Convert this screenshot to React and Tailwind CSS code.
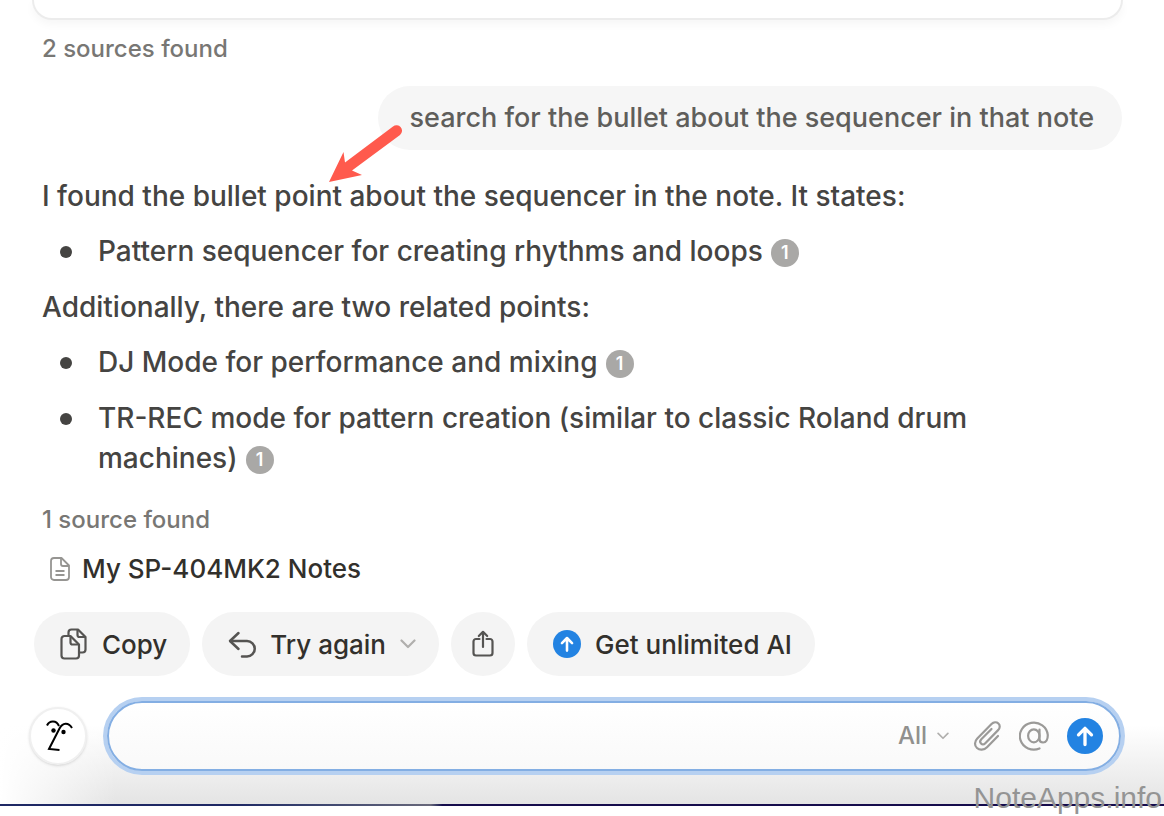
import React from 'react';

const CopyIcon = () => (
  <svg width="28" height="32" viewBox="0 0 28 32" fill="none" stroke="#555452" strokeWidth="2.200" strokeLinejoin="round" aria-hidden="true">
    <path d="M8.500 7.500V4.500a3 3 0 0 1 3-3H18L25.500 9v12.500a3 3 0 0 1-3 3H19" />
    <path d="M17.500 1.500V7a2 2 0 0 0 2 2h6" />
    <path d="M4.500 8H10.500L19 16.500V27.500a3 3 0 0 1-3 3H4.500a3 3 0 0 1-3-3V11a3 3 0 0 1 3-3Z" />
    <path d="M10.500 8v6.500a2 2 0 0 0 2 2H19" />
  </svg>
);

const UndoIcon = () => (
  <svg width="28" height="28" viewBox="0 0 28 28" fill="none" stroke="#555452" strokeWidth="2.500" strokeLinecap="round" strokeLinejoin="round" aria-hidden="true">
    <path d="M10.500 3 2 11l8.500 8" />
    <path d="M2.500 11H19a7.500 7.500 0 0 1 0 15.500H14" />
  </svg>
);

const ShareIcon = () => (
  <svg width="22" height="28" viewBox="0 0 22 28" fill="none" stroke="#555452" strokeWidth="2.200" strokeLinecap="round" strokeLinejoin="round" aria-hidden="true">
    <path d="M7.500 9H4a2.500 2.500 0 0 0-2.500 2.500v11.500A2.500 2.500 0 0 0 4 25.500h14a2.500 2.500 0 0 0 2.500-2.500V11.500A2.500 2.500 0 0 0 18 9h-3.500" />
    <path d="M11 17V2M6.800 6 11 1.800 15.200 6" />
  </svg>
);

const PageIcon = () => (
  <svg width="20" height="24" viewBox="0 0 20 24" fill="none" stroke="#969592" strokeWidth="1.800" strokeLinejoin="round" aria-hidden="true">
    <path d="M4 1h7.500L19 8.500V20a3 3 0 0 1-3 3H4a3 3 0 0 1-3-3V4a3 3 0 0 1 3-3Z" />
    <path d="M11 1v6a2 2 0 0 0 2 2h6M5.500 14h9M5.500 18h9" />
  </svg>
);

const Chevron = ({ className }) => (
  <svg className={className} viewBox="0 0 16 10" fill="none" stroke="#b0afad" strokeWidth="2.200" strokeLinecap="round" strokeLinejoin="round" aria-hidden="true">
    <path d="m1.500 1.500 6.500 6.500 6.500-6.500" />
  </svg>
);

const ClipIcon = () => (
  <svg width="28" height="32" viewBox="0 0 28 32" fill="none" stroke="#9b9a98" strokeWidth="2.200" strokeLinecap="round" aria-hidden="true">
    <path d="M25 16 14 27.200c-3 3-7.300 3.300-10 .8s-2.700-6.500.3-9.500L18.500 4c2-2 5-2.300 6.900-.5s1.700 4.600-.3 6.600L12.300 23.200c-1.300 1.300-3.200 1.400-4.300.3s-1-2.900.3-4.200L18.500 9" />
  </svg>
);

const AtIcon = () => (
  <svg width="30" height="30" viewBox="0 0 30 30" fill="none" stroke="#9b9a98" strokeWidth="2.200" strokeLinecap="round" aria-hidden="true">
    <path d="M20.500 27.500A14 13.500 0 1 1 28.800 14c0 4.500-1.600 7.500-4.700 7.500-2.300 0-3.600-1.300-3.600-3.500V8.500" />
    <ellipse cx="14.800" cy="14.800" rx="5.700" ry="6.500" />
  </svg>
);

const UpArrow = ({ size }) => (
  <svg width={size} height={size} viewBox="0 0 36 36" aria-hidden="true">
    <circle cx="18" cy="18" r="18" fill="#2383e2" />
    <path d="M18 26.500V10.500M11.500 16.800 18 10.300l6.500 6.500" fill="none" stroke="#fff" strokeWidth="3.300" strokeLinecap="round" strokeLinejoin="round" />
  </svg>
);

const FaceIcon = () => (
  <svg width="30" height="32" viewBox="0 0 30 32" fill="none" stroke="#000" strokeWidth="2" aria-hidden="true">
    <path d="M4 5.500C6.500 0 13.500 0 16 6" />
    <path d="M29 8C25.500 2 19.500 2.500 16.500 8.500L6 29l10.500 1" />
    <circle cx="10.500" cy="10.500" r="2.200" fill="#000" stroke="none" />
    <circle cx="20.500" cy="12" r="2.200" fill="#000" stroke="none" />
  </svg>
);

const Citation = () => (
  <a href="#source" className="ml-2 inline-flex size-7 items-center justify-center rounded-full bg-[#a9a8a6] align-[2px] text-lg leading-none font-semibold text-white">
    1
  </a>
);

const Bullet = ({ children }) => (
  <li className="flex gap-[26px]">
    <span className="mt-[15px] size-3 shrink-0 rounded-full bg-[#454442]" />
    <span className="max-w-[880px]">
      {children}
      <Citation />
    </span>
  </li>
);

const Answer = () => (
  <div className="mt-[26px] px-[42px] text-[28px] leading-10 font-medium text-[#454442]">
    <p>I found the bullet point about the sequencer in the note. It states:</p>
    <ul className="mt-[15px] pl-[18px]">
      <Bullet>Pattern sequencer for creating rhythms and loops</Bullet>
    </ul>
    <p className="mt-4">Additionally, there are two related points:</p>
    <ul className="mt-[15px] flex flex-col gap-4 pl-[18px]">
      <Bullet>DJ Mode for performance and mixing</Bullet>
      <Bullet>TR-REC mode for pattern creation (similar to classic Roland drum machines)</Bullet>
    </ul>
  </div>
);

const Actions = () => (
  <div className="mt-[27px] flex gap-3 px-[34px] text-[26px] font-medium text-[#32302c]">
    <button type="button" className="flex h-16 items-center gap-3.5 rounded-full bg-[#f4f4f4] pr-[23px] pl-[26px]">
      <CopyIcon />
      Copy
    </button>
    <button type="button" className="flex h-16 items-center gap-3.5 rounded-full bg-[#f4f4f4] pr-[23px] pl-[26px]">
      <UndoIcon />
      Try again
      <Chevron className="h-2.5 w-4" />
    </button>
    <button type="button" aria-label="Share" className="flex size-16 items-center justify-center rounded-full bg-[#f4f4f4]">
      <ShareIcon />
    </button>
    <button type="button" className="flex h-16 items-center gap-3.5 rounded-full bg-[#f4f4f4] pr-[23px] pl-[26px]">
      <UpArrow size={28} />
      Get unlimited AI
    </button>
  </div>
);

const Composer = () => (
  <form className="mt-4 flex items-center gap-5 bg-[linear-gradient(to_right,white,transparent_10%),linear-gradient(to_bottom,white_30%,#e4e4e4)] pt-[9px] pr-[43px] pb-[33px] pl-[29px]">
    <span className="flex size-[58px] shrink-0 items-center justify-center rounded-full border-2 border-[#f0f0f0] bg-white shadow-sm">
      <FaceIcon />
    </span>
    <div className="flex h-[70px] min-w-0 flex-1 items-center rounded-full border-2 border-[#83aee3] bg-linear-to-b from-white to-[#f9f9f9] pr-4 pl-8 ring-4 ring-[#b6d0f1]">
      <input type="text" aria-label="Message" className="h-12 min-w-0 flex-1 bg-transparent text-[26px] outline-none" />
      <button type="button" className="flex items-center gap-2.5 text-2xl font-medium text-[#91908e]">
        All
        <Chevron className="h-2 w-3" />
      </button>
      <button type="button" aria-label="Attach file" className="ml-6">
        <ClipIcon />
      </button>
      <button type="button" aria-label="Mention" className="ml-[18px]">
        <AtIcon />
      </button>
      <button type="submit" aria-label="Send" className="ml-[18px]">
        <UpArrow size={36} />
      </button>
    </div>
  </form>
);

const App = () => (
  <main className="relative overflow-hidden bg-white font-['Inter',sans-serif]">
    <div className="mr-[41px] ml-8 h-5 rounded-b-[28px] border-2 border-t-0 border-[#ececec] bg-white shadow-[0_4px_10px_rgba(0,0,0,0.04)]" />
    <p className="mt-[13px] px-[42px] text-2xl leading-8 font-medium text-[#787774]">2 sources found</p>

    <div className="mt-[21px] flex justify-end pr-[42px]">
      <p className="relative rounded-full bg-[#f6f6f6] py-3 pr-7 pl-8 text-[27px] leading-10 font-medium text-[#5f5e5b]">
        search for the bullet about the sequencer in that note
        <svg className="absolute top-[38px] -left-[50px]" width="74" height="60" viewBox="0 0 74 60" aria-hidden="true">
          <path d="M65 2.500a5.500 5.500 0 0 1 7 8.500L24 46.500l10 4.500L1 58 15.500 28 17 38.500Z" fill="#ff5a4d" />
        </svg>
      </p>
    </div>

    <Answer />

    <p className="mt-[26px] px-[42px] text-2xl leading-8 font-medium text-[#787774]">1 source found</p>
    <a id="source" href="#source" className="mt-[17px] ml-[50px] flex w-fit items-center gap-3 text-[26px] leading-8 font-medium text-[#32302c]">
      <PageIcon />
      My SP-404MK2 Notes
    </a>

    <Actions />
    <Composer />
    <div className="h-0.5 bg-linear-to-r from-[#1e2864] from-20% via-[#68687a] via-37% to-[#150c4c] to-38%" />
    <div className="h-3" />
    <p className="absolute right-0.5 bottom-0.5 font-['Liberation_Sans',Arial,sans-serif] text-[30px] leading-9 text-[#949494]">NoteApps.info</p>
  </main>
);

export default App;
